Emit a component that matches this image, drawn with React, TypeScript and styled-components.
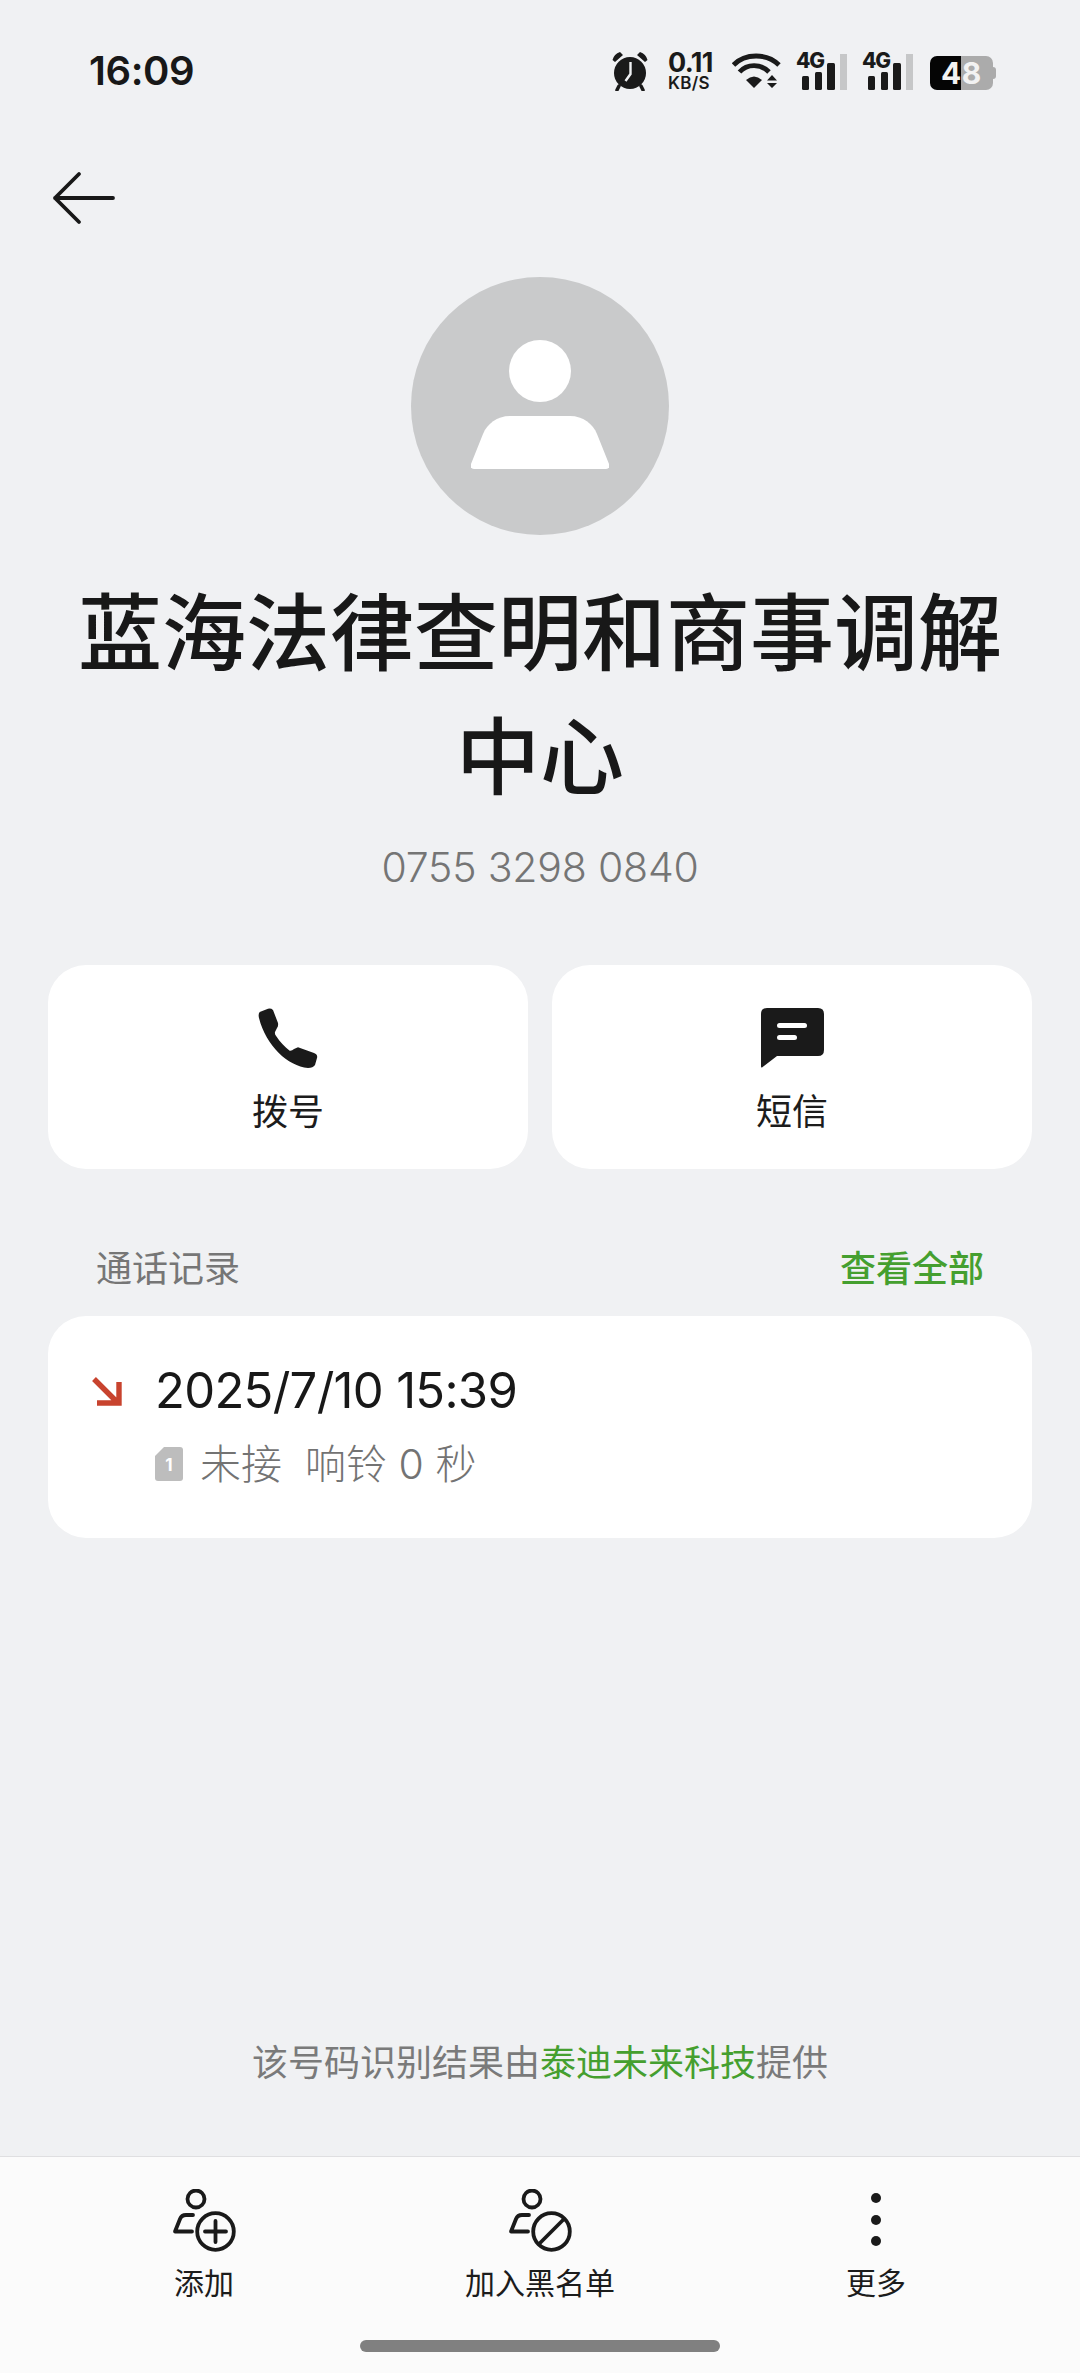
import React from "react";
import styled, { createGlobalStyle } from "styled-components";

const Global = createGlobalStyle`
  html, body { margin: 0; padding: 0; background: #f0f1f3; }
  * { box-sizing: border-box; }
`;
const CJK = `Inter, "Noto Sans CJK SC", sans-serif`;

const Page = styled.div`
  width: 1080px; height: 2373px; display: flex; flex-direction: column;
  background: #f0f1f3; font-family: ${CJK}; color: #181818; overflow: hidden;
`;
const StatusBar = styled.div`
  height: 140px; flex: none; padding: 48px 84px 0 89px; display: flex; justify-content: space-between; align-items: flex-start;
`;
const Time = styled.div`
  font-size: 40px; line-height: 46px; font-weight: 600; letter-spacing: -0.4px;
`;
const StatusIcons = styled.div`
  display: flex; gap: 15px; align-items: flex-start; padding-top: 5px;
`;
const NetSpeed = styled.div`
  width: 49px; margin-top: -2px; display: flex; flex-direction: column; align-items: flex-start; font-weight: 700; color: #1a1a1a;
`;
const NetValue = styled.span`font-size: 27px; line-height: 24px; letter-spacing: -0.6px;`;
const NetUnit = styled.span`font-size: 17px; line-height: 16px; font-weight: 600; letter-spacing: 0.3px;`;
const Battery = styled.div`
  position: relative; width: 63px; height: 34px; margin: 3px 3px 0 2px; border-radius: 7px;
  background: linear-gradient(90deg, #050505 50%, #ababab 50%);
  display: flex; align-items: center; justify-content: center;
  color: #f2f2f2; font-size: 30px; font-weight: 700; letter-spacing: 0.5px;
  &::after { content: ""; position: absolute; right: -3px; top: 11px; width: 3px; height: 12px; background: #ababab; border-radius: 0 3px 3px 0; }
`;
const BackRow = styled.div`
  height: 137px; flex: none; padding: 31px 0 0 52px;
`;
const Avatar = styled.div`
  width: 258px; height: 258px; flex: none; align-self: center; border-radius: 50%; background: #c9cacb;
  display: flex; align-items: center; justify-content: center; padding-bottom: 4px;
`;
const Title = styled.h1`
  margin: 37px 44px 0; font-size: 84px; line-height: 124px; font-weight: 500; text-align: center; color: #181818;
`;
const Phone = styled.div`
  margin-top: 19px; text-align: center; font-size: 41px; line-height: 56px; font-weight: 300; color: #757575; letter-spacing: -0.2px;
`;
const Actions = styled.div`
  margin: 70px 48px 0; display: grid; grid-template-columns: 1fr 1fr; gap: 24px;
`;
const ActionCard = styled.div`
  height: 204px; border-radius: 38px; background: #fff; display: flex; flex-direction: column; align-items: center; padding-top: 40px;
`;
const IconSlot = styled.div`
  height: 65px; display: flex; align-items: center; justify-content: center;
`;
const ActionLabel = styled.div`
  margin-top: 17px; font-size: 36px; line-height: 50px; font-weight: 400; color: #1c1c1c;
`;
const SectionHead = styled.div`
  margin: 72px 48px 0; padding: 0 48px; height: 50px; display: flex; justify-content: space-between; align-items: center;
`;
const SectionTitle = styled.div`font-size: 36px; color: #767676;`;
const SectionLink = styled.div`font-size: 36px; font-weight: 500; color: #459f2f;`;
const RecordCard = styled.div`
  margin: 25px 48px 0; height: 222px; border-radius: 38px; background: #fff; padding: 44px 44px 0;
  display: grid; grid-template-columns: 63px 1fr;
`;
const ArrowCell = styled.div`padding-top: 17px;`;
const RecordInfo = styled.div`display: flex; flex-direction: column;`;
const RecordDate = styled.div`font-size: 49px; line-height: 62px; font-weight: 400; color: #181818; letter-spacing: -0.7px;`;
const RecordMeta = styled.div`
  margin-top: 14px; display: flex; align-items: center; gap: 17px; font-size: 41px; line-height: 56px; color: #737373; font-weight: 300;
`;
const Credit = styled.div`
  margin-top: auto; margin-bottom: 68px; text-align: center; font-size: 36px; line-height: 50px; color: #7a7a7a; font-weight: 400;
`;
const Accent = styled.span`color: #459f2f;`;
const BottomBar = styled.div`
  height: 217px; flex: none; background: #fbfbfb; border-top: 1px solid #dfdfe1; position: relative;
  display: grid; grid-template-columns: repeat(3, 1fr); padding: 32px 36px 0; align-items: start;
`;
const BarItem = styled.div`
  display: flex; flex-direction: column; align-items: center;
`;
const BarIcon = styled.div`
  height: 64px; display: flex; align-items: center; justify-content: center;
`;
const BarLabel = styled.div`
  margin-top: 9px; font-size: 30px; line-height: 42px; color: #1c1c1c;
`;
const HomeIndicator = styled.div`
  position: absolute; left: 360px; bottom: 21px; width: 360px; height: 12px; border-radius: 6px; background: #808080;
`;
const SignalBox = styled.svg`margin-top: -6px;`;

const Alarm = () => (
  <svg width="41" height="40" viewBox="0 0 41 40" style={{ marginTop: -2 }}>
    <circle cx="18" cy="22" r="16" fill="#1a1a1a" />
    <path d="M0.5 9 Q2 3 8 1 L11 4 L3 11 Z M35.5 9 Q34 3 28 1 L25 4 L33 11 Z" fill="#1a1a1a" />
    <path d="M7 35 L5 39 M29 35 L31 39" stroke="#1a1a1a" strokeWidth="3.5" strokeLinecap="round" />
    <path d="M18.5 11 V23 L13.5 30" stroke="#f0f1f3" strokeWidth="2.4" fill="none" />
  </svg>
);
const Wifi = () => (
  <svg width="49" height="38" viewBox="0 0 49 38" style={{ marginTop: -1 }}>
    <g fill="none" stroke="#1a1a1a" strokeWidth="4.8">
      <path d="M1.5 13 C13 1 35 1 47 13" />
      <path d="M7.5 20 C15 11.5 29 11.5 37 20" />
    </g>
    <path d="M14 28 Q22 21 30 28 L22 36 Z" fill="#1a1a1a" />
    <path d="M40 23 L45 28.5 H35 Z M35 31 H45 L40 36 Z" fill="#1a1a1a" />
  </svg>
);
const Signal = () => (
  <SignalBox width="51" height="43" viewBox="0 -6 51 43">
    <text x="0" y="15" fontFamily="Inter, sans-serif" fontWeight="800" fontSize="21" letterSpacing="-1.2" fill="#1a1a1a">4G</text>
    <rect x="6" y="23" width="7" height="14" rx="1.5" fill="#1a1a1a" />
    <rect x="19" y="19" width="7" height="18" rx="1.5" fill="#1a1a1a" />
    <rect x="31" y="10" width="8" height="27" rx="1.5" fill="#1a1a1a" />
    <rect x="44" y="1" width="7" height="36" fill="#c6c7c8" />
  </SignalBox>
);
const BackArrow = () => (
  <svg width="64" height="54" viewBox="0 0 64 54">
    <path d="M3 27 H61 M27 3 L3 27 L27 51" fill="none" stroke="#181818" strokeWidth="3.8" strokeLinecap="round" strokeLinejoin="round" />
  </svg>
);
const PersonGlyph = () => (
  <svg width="138" height="129" viewBox="0 0 138 129">
    <circle cx="69" cy="31" r="31" fill="#fff" />
    <path d="M39 76 H99 C112 76 122 84 126 94 L138 124 Q139 129 135 129 H3 Q-1 129 0 124 L12 94 C16 84 26 76 39 76 Z" fill="#fff" />
  </svg>
);
const PhoneIcon = () => (
  <svg width="60" height="60" viewBox="0 0 60 60">
    <path d="M1.7 4 L10 0.7 Q13 0 15 2 L20 15 Q20.5 18 19 20 L17 24 Q16.5 26 18.3 28.3 C22 34 27 39 31.7 42.7 Q34 43 36 41 L40 39.3 L56 45 Q60 46.5 59 50 L57 57 Q55 60 50 60 C30 58 8 38 1 10 Q0 6 1.7 4 Z" fill="#1a1a1a" />
  </svg>
);
const MessageIcon = () => (
  <svg width="63" height="60" viewBox="0 0 63 60">
    <path d="M6 0 H57 Q63 0 63 6 V42 Q63 48 57 48 H16 L1 59.5 Q0 60 0 58 V6 Q0 0 6 0 Z" fill="#1a1a1a" />
    <rect x="16" y="15" width="30" height="5" rx="2.5" fill="#fff" />
    <rect x="16" y="27" width="20" height="5" rx="2.5" fill="#fff" />
  </svg>
);
const MissedArrow = () => (
  <svg width="30" height="29" viewBox="0 0 30 29">
    <path d="M2 2 L25 25 M27 5 V26 H5" fill="none" stroke="#c8432e" strokeWidth="5.4" />
  </svg>
);
const SimIcon = () => (
  <svg width="28" height="34" viewBox="0 0 28 34">
    <path d="M9 0 H25 Q28 0 28 3 V31 Q28 34 25 34 H3 Q0 34 0 31 V9 Z" fill="#bdbdbd" />
    <text x="14" y="24" textAnchor="middle" fontFamily="Inter, sans-serif" fontWeight="700" fontSize="17" fill="#fff">1</text>
  </svg>
);
const PersonOutline = () => (
  <g fill="none" stroke="#1a1a1a" strokeWidth="3.8">
    <circle cx="24" cy="10" r="8.5" />
    <path d="M21 26 H14 Q9.5 26 8 30 L3 42.5 H20" strokeLinecap="round" strokeLinejoin="round" />
  </g>
);
const AddIcon = () => (
  <svg width="64" height="64" viewBox="0 0 64 64">
    <PersonOutline />
    <circle cx="43.5" cy="42.5" r="18.3" fill="none" stroke="#1a1a1a" strokeWidth="3.8" />
    <path d="M43.5 32 V53 M33 42.5 H54" stroke="#1a1a1a" strokeWidth="3.8" strokeLinecap="round" />
  </svg>
);
const BlockIcon = () => (
  <svg width="64" height="64" viewBox="0 0 64 64">
    <PersonOutline />
    <circle cx="43.5" cy="42.5" r="18.3" fill="none" stroke="#1a1a1a" strokeWidth="3.8" />
    <path d="M31 55 L56 30" stroke="#1a1a1a" strokeWidth="3.8" />
  </svg>
);
const MoreIcon = () => (
  <svg width="12" height="64" viewBox="0 0 12 64">
    <circle cx="6" cy="9" r="5" fill="#1a1a1a" />
    <circle cx="6" cy="31" r="5" fill="#1a1a1a" />
    <circle cx="6" cy="52" r="5" fill="#1a1a1a" />
  </svg>
);

export default function App() {
  return (
    <Page>
      <Global />
      <StatusBar>
        <Time>16:09</Time>
        <StatusIcons>
          <Alarm />
          <NetSpeed>
            <NetValue>0.11</NetValue>
            <NetUnit>KB/S</NetUnit>
          </NetSpeed>
          <Wifi />
          <Signal />
          <Signal />
          <Battery>48</Battery>
        </StatusIcons>
      </StatusBar>
      <BackRow>
        <BackArrow />
      </BackRow>
      <Avatar>
        <PersonGlyph />
      </Avatar>
      <Title>蓝海法律查明和商事调解中心</Title>
      <Phone>0755 3298 0840</Phone>
      <Actions>
        <ActionCard>
          <IconSlot><PhoneIcon /></IconSlot>
          <ActionLabel>拨号</ActionLabel>
        </ActionCard>
        <ActionCard>
          <IconSlot><MessageIcon /></IconSlot>
          <ActionLabel>短信</ActionLabel>
        </ActionCard>
      </Actions>
      <SectionHead>
        <SectionTitle>通话记录</SectionTitle>
        <SectionLink>查看全部</SectionLink>
      </SectionHead>
      <RecordCard>
        <ArrowCell><MissedArrow /></ArrowCell>
        <RecordInfo>
          <RecordDate>2025/7/10 15:39</RecordDate>
          <RecordMeta>
            <SimIcon />
            <span>未接&nbsp;&nbsp;响铃 0 秒</span>
          </RecordMeta>
        </RecordInfo>
      </RecordCard>
      <Credit>该号码识别结果由<Accent>泰迪未来科技</Accent>提供</Credit>
      <BottomBar>
        <BarItem>
          <BarIcon><AddIcon /></BarIcon>
          <BarLabel>添加</BarLabel>
        </BarItem>
        <BarItem>
          <BarIcon><BlockIcon /></BarIcon>
          <BarLabel>加入黑名单</BarLabel>
        </BarItem>
        <BarItem>
          <BarIcon><MoreIcon /></BarIcon>
          <BarLabel>更多</BarLabel>
        </BarItem>
        <HomeIndicator />
      </BottomBar>
    </Page>
  );
}
